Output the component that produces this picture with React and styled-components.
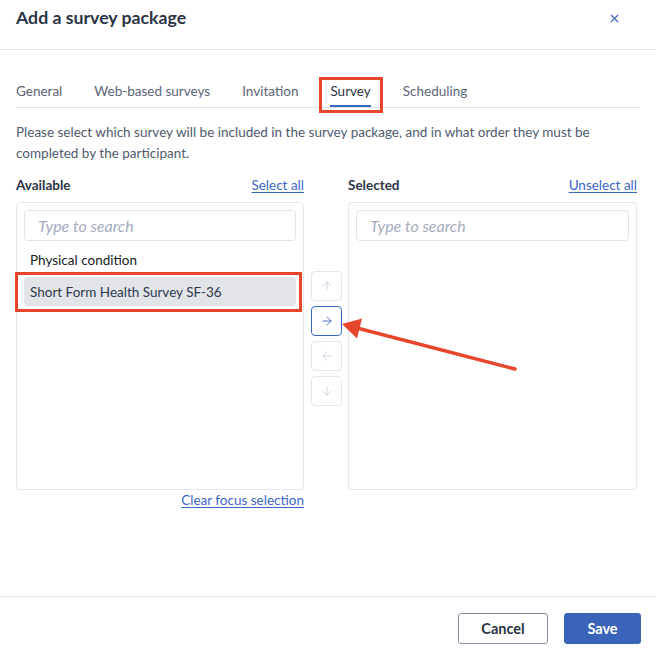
import React from 'react'
import styled, { createGlobalStyle } from 'styled-components'
import { ArrowUp, ArrowRight, ArrowLeft, ArrowDown, X } from 'lucide-react'

const GlobalStyle = createGlobalStyle`
  html, body {
    margin: 0;
    padding: 0;
    background: #fff;
    font-family: Lato, "Open Sans", Arial, sans-serif;
  }
  * { box-sizing: border-box; }
`

const tabs = ['General', 'Web-based surveys', 'Invitation', 'Survey', 'Scheduling']

const App = () => (
  <>
    <GlobalStyle />
    <Dialog>
      <Header>
        <Title>Add a survey package</Title>
        <Close aria-label="Close">
          <X size={13} strokeWidth={2} />
        </Close>
      </Header>

      <Body>
        <TabBar>
          {tabs.map(t => (
            <Tab key={t} active={t === 'Survey'}>
              {t}
            </Tab>
          ))}
        </TabBar>

        <Intro>
          Please select which survey will be included in the survey package, and in what order they must be
          completed by the participant.
        </Intro>

        <Transfer>
          <ColHead>
            <Label>Available</Label>
            <LinkText>Select all</LinkText>
          </ColHead>
          <span />
          <ColHead>
            <Label>Selected</Label>
            <LinkText>Unselect all</LinkText>
          </ColHead>

          <Panel>
            <Search placeholder="Type to search" />
            <List>
              <Item>Physical condition</Item>
              <Item selected>Short Form Health Survey SF-36</Item>
            </List>
          </Panel>

          <Moves>
            <MoveButton>
              <ArrowUp size={14} strokeWidth={1.5} />
            </MoveButton>
            <MoveButton enabled>
              <ArrowRight size={14} strokeWidth={1.5} />
            </MoveButton>
            <MoveButton>
              <ArrowLeft size={14} strokeWidth={1.5} />
            </MoveButton>
            <MoveButton>
              <ArrowDown size={14} strokeWidth={1.5} />
            </MoveButton>
          </Moves>

          <Panel>
            <Search placeholder="Type to search" />
          </Panel>

          <ClearRow>
            <LinkText>Clear focus selection</LinkText>
          </ClearRow>
        </Transfer>
      </Body>

      <Footer>
        <Button>Cancel</Button>
        <Button primary>Save</Button>
      </Footer>

      <Pointer viewBox="0 0 656 649">
        <line x1="515" y1="369" x2="357" y2="328" stroke="#e8462c" strokeWidth="3.5" strokeLinecap="round" />
        <polygon points="342,324 362,318.5 357,338.5" fill="#e8462c" />
      </Pointer>
    </Dialog>
  </>
)

const Dialog = styled.div`
  position: relative;
  width: 656px;
  height: 649px;
  display: flex;
  flex-direction: column;
  background: #fff;
`

const Header = styled.header`
  height: 50px;
  padding: 7px 16px 0 16px;
  display: flex;
  justify-content: space-between;
  align-items: flex-start;
  border-bottom: 1px solid #e6e8ec;
`

const Title = styled.h1`
  margin: 0;
  font-size: 17.7px;
  line-height: 22px;
  font-weight: 700;
  color: #2b3445;
`

const Close = styled.button`
  border: 0;
  background: none;
  padding: 0;
  margin: 5px 19px 0 0;
  color: #3a66c4;
  display: flex;
`

const Body = styled.main`
  flex: 1;
  padding: 27px 16px 0 16px;
`

const TabBar = styled.nav`
  display: flex;
  gap: 32px;
  border-bottom: 1px solid #dfe2e7;
`

const Tab = styled.div`
  position: relative;
  padding: 4px 0 4px;
  font-size: 13.5px;
  line-height: 20px;
  color: ${p => (p.active ? '#2b3445' : '#5b6578')};
  border-bottom: 2px solid ${p => (p.active ? '#3a66c4' : 'transparent')};

  ${p =>
    p.active &&
    `
    &::after {
      content: '';
      position: absolute;
      top: 0;
      left: -11px;
      right: -12px;
      bottom: -8px;
      border: 3px solid #e8462c;
    }
  `}
`

const Intro = styled.p`
  margin: 14px 0 0 0;
  font-size: 13.5px;
  line-height: 21px;
  color: #4f5a6e;
`

const Transfer = styled.section`
  width: 621px;
  margin-top: 10px;
  display: grid;
  grid-template-columns: 288px 32px 289px;
  column-gap: 6px;
`

const ColHead = styled.div`
  height: 21px;
  margin-bottom: 7px;
  display: flex;
  justify-content: space-between;
  align-items: center;
`

const Label = styled.span`
  font-size: 13.5px;
  font-weight: 700;
  color: #2b3445;
`

const LinkText = styled.a`
  font-size: 13.5px;
  color: #3a66c4;
  text-decoration: underline;
  text-underline-offset: 2px;
  cursor: pointer;
`

const Panel = styled.div`
  height: 288px;
  padding: 7px;
  border: 1px solid #e3e6eb;
  border-radius: 4px;
`

const Search = styled.input`
  width: 100%;
  height: 31px;
  padding: 0 13px;
  border: 1px solid #e1e4e9;
  border-radius: 4px;
  font-family: inherit;
  font-size: 16px;
  outline: none;

  &::placeholder {
    color: #a4acbe;
    font-style: italic;
  }
`

const List = styled.div`
  margin-top: 4px;
  display: flex;
  flex-direction: column;
  gap: 3px;
`

const Item = styled.div`
  position: relative;
  height: 29px;
  padding: 0 6px;
  display: flex;
  align-items: center;
  font-size: 13.5px;
  border-radius: 4px;
  color: ${p => (p.selected ? '#2c3950' : '#161b24')};
  background: ${p => (p.selected ? '#e2e4e8' : 'transparent')};

  ${p =>
    p.selected &&
    `
    &::after {
      content: '';
      position: absolute;
      top: -5px;
      left: -9px;
      right: -6px;
      bottom: -6px;
      border: 3px solid #e8462c;
    }
  `}
`

const Moves = styled.div`
  padding: 69px 0 0 1px;
  display: flex;
  flex-direction: column;
  gap: 5px;
`

const MoveButton = styled.button`
  width: 31px;
  height: 30px;
  padding: 0;
  display: flex;
  align-items: center;
  justify-content: center;
  background: #fff;
  border-radius: 4px;
  border: 1px solid ${p => (p.enabled ? '#3a66c4' : '#e3e6eb')};
  color: ${p => (p.enabled ? '#3a66c4' : '#c8cedb')};
`

const ClearRow = styled.div`
  padding-top: 2px;
  display: flex;
  justify-content: flex-end;
`

const Footer = styled.footer`
  height: 53px;
  padding: 16px 15px 0 0;
  display: flex;
  justify-content: flex-end;
  align-items: flex-start;
  gap: 16px;
  border-top: 1px solid #e3e6eb;
`

const Button = styled.button`
  height: 31px;
  padding: 0;
  width: ${p => (p.primary ? '77px' : '90px')};
  border-radius: 3px;
  font-family: inherit;
  font-size: 14.5px;
  font-weight: 700;
  color: ${p => (p.primary ? '#fff' : '#2b3445')};
  background: ${p => (p.primary ? '#3964b9' : '#fff')};
  border: 1px solid ${p => (p.primary ? '#3964b9' : '#8791a6')};
`

const Pointer = styled.svg`
  position: absolute;
  inset: 0;
  width: 656px;
  height: 649px;
  pointer-events: none;
`

export default App
